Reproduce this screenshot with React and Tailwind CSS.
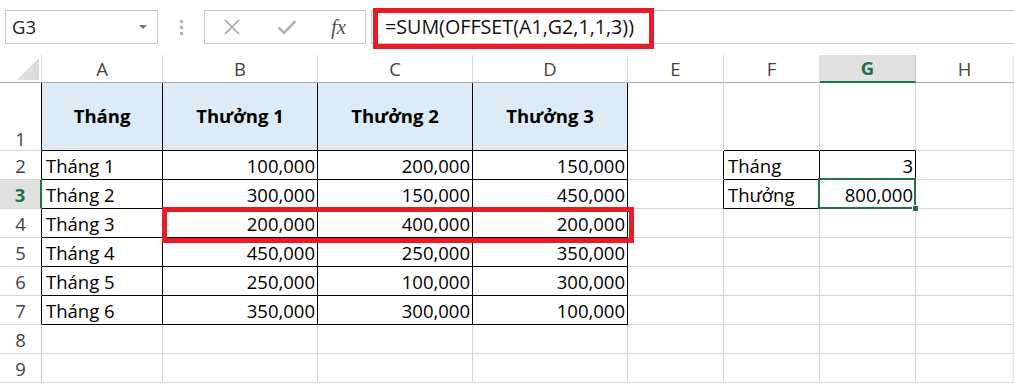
import React from "react";

const GRID = "grid grid-cols-[42px_121px_155px_155px_155px_96px_96px_96px_98px]";

const data = [
  ["Tháng 1", "100,000", "200,000", "150,000"],
  ["Tháng 2", "300,000", "150,000", "450,000"],
  ["Tháng 3", "200,000", "400,000", "200,000"],
  ["Tháng 4", "450,000", "250,000", "350,000"],
  ["Tháng 5", "250,000", "100,000", "300,000"],
  ["Tháng 6", "350,000", "300,000", "100,000"],
];

function cellContent(r, c) {
  if (r === 1 && c === 0) return "Tháng";
  if (r === 1 && c >= 1 && c <= 3) return "Thưởng " + c;
  if (r >= 2 && r <= 7 && c <= 3) return data[r - 2][c];
  if (r === 2 && c === 5) return "Tháng";
  if (r === 2 && c === 6) return "3";
  if (r === 3 && c === 5) return "Thưởng";
  if (r === 3 && c === 6) return "800,000";
  return "";
}

function Cell({ r, c }) {
  const t1 = r <= 7 && c <= 3;
  const t2 = (r === 2 || r === 3) && (c === 5 || c === 6);
  const rightBlack = t1 || t2 || (c === 4 && (r === 2 || r === 3));
  const bottomBlack = t1 || t2 || (r === 1 && (c === 5 || c === 6));
  const header = r === 1 && c <= 3;
  const text = cellContent(r, c);
  const rightAlign = text && c !== 0 && c !== 5 && !header;
  return (
    <div
      className={[
        "relative flex border-r border-b px-[4px] whitespace-nowrap",
        rightBlack ? "border-r-black" : "border-r-[#d4d4d4]",
        bottomBlack ? "border-b-black" : "border-b-[#d4d4d4]",
        header ? "bg-[#ddebf7] items-center justify-center font-bold pb-[1px]" : "items-center pt-[2px]",
        rightAlign ? "justify-end pr-[2px]" : "",
      ].join(" ")}
    >
      {text}
      {r === 3 && c === 6 && (
        <>
          <div className="absolute z-10 left-[-2px] top-[-2px] right-[-1px] bottom-[-1px] border-2 border-[#217346]" />
          <div className="absolute z-10 right-[-4px] bottom-[-4px] w-[7px] h-[7px] bg-[#217346] border border-white" />
        </>
      )}
    </div>
  );
}

function Row({ r }) {
  const isSel = r === 3;
  return (
    <div className={`${GRID} ${r === 1 ? "h-[68px]" : "h-[29px]"}`}>
      <div
        className={[
          "flex justify-center border-b border-b-[#d4d4d4] pt-[2px]",
          r === 1 ? "items-end pb-[2px]" : "items-center",
          isSel
            ? "bg-[#e1e1e1] text-[#217346] font-bold border-r-2 border-r-[#217346]"
            : r <= 7
            ? "text-[#444] border-r border-r-black"
            : "text-[#444] border-r border-r-[#c6c6c6]",
        ].join(" ")}
      >
        {r}
      </div>
      {[0, 1, 2, 3, 4, 5, 6, 7].map((c) => (
        <Cell key={c} r={r} c={c} />
      ))}
    </div>
  );
}

export default function App() {
  const letters = ["A", "B", "C", "D", "E", "F", "G", "H"];
  return (
    <div
      className="relative w-[1014px] h-[384px] overflow-hidden bg-white text-black text-[18.5px] leading-none"
      style={{ fontFamily: '"Open Sans", "Noto Sans", sans-serif' }}
    >
      {/* toolbar */}
      <div className="h-[55px] flex items-start pt-[10px]">
        <div className="ml-[5px] w-[153px] h-[34px] border border-[#c6c6c6] flex items-center justify-between pl-[6px] pr-[10px]">
          <span className="text-[18.5px] text-[#222]">G3</span>
          <svg width="8" height="4" viewBox="0 0 8 4">
            <polygon points="0,0 8,0 4,4" fill="#777" />
          </svg>
        </div>
        <div className="w-[46px] h-[34px] flex flex-col items-center justify-center gap-[3px]">
          <div className="w-[3px] h-[3px] bg-[#b0b0b0]" />
          <div className="w-[3px] h-[3px] bg-[#b0b0b0]" />
          <div className="w-[3px] h-[3px] bg-[#b0b0b0]" />
        </div>
        <div className="w-[162px] h-[34px] border border-[#c6c6c6] flex items-center">
          <svg className="ml-[18px]" width="18" height="16" viewBox="0 0 18 16">
            <path d="M2 1 L16 15 M16 1 L2 15" stroke="#a6a6a6" strokeWidth="1.6" fill="none" />
          </svg>
          <svg className="ml-[36px]" width="20" height="16" viewBox="0 0 20 16">
            <path d="M1.5 8.5 L7 14 L18.5 2" stroke="#b3b3b3" strokeWidth="2.6" fill="none" />
          </svg>
          <span
            className="ml-[34px] text-[21px] italic text-[#555]"
            style={{ fontFamily: '"Liberation Serif", "DejaVu Serif", serif' }}
          >
            fx
          </span>
        </div>
        <div className="ml-[5px] flex-1 h-[34px] border-y border-l border-[#c6c6c6] flex items-center pl-[13px]">
          <span className="text-[19.7px] text-[#111]">=SUM(OFFSET(A1,G2,1,1,3))</span>
        </div>
      </div>

      {/* column headers */}
      <div className={`${GRID} h-[28px]`}>
        <div className="relative border-r border-r-[#dadada] border-b border-b-[#ababab]">
          <svg className="absolute right-[2px] bottom-[2px]" width="22" height="22" viewBox="0 0 22 22">
            <polygon points="22,0 22,22 0,22" fill="#dcdcdc" />
          </svg>
        </div>
        {letters.map((l) =>
          l === "G" ? (
            <div
              key={l}
              className="flex items-center justify-center pt-[1px] bg-[#e1e1e1] text-[#217346] font-bold border-r border-r-[#c6c6c6] border-b-2 border-b-[#217346]"
            >
              {l}
            </div>
          ) : (
            <div
              key={l}
              className="flex items-center justify-center pt-[2px] text-[#444] border-r border-r-[#dadada] border-b border-b-[#ababab]"
            >
              {l}
            </div>
          )
        )}
      </div>

      {/* rows */}
      {[1, 2, 3, 4, 5, 6, 7, 8, 9].map((r) => (
        <Row key={r} r={r} />
      ))}

      {/* red highlight boxes */}
      <div className="absolute z-20 left-[373px] top-[8px] w-[281px] h-[41px] border-[5px] border-[#e81c24]" />
      <div className="absolute z-20 left-[162px] top-[207px] w-[472px] h-[36px] border-[5px] border-[#e81c24]" />
    </div>
  );
}
